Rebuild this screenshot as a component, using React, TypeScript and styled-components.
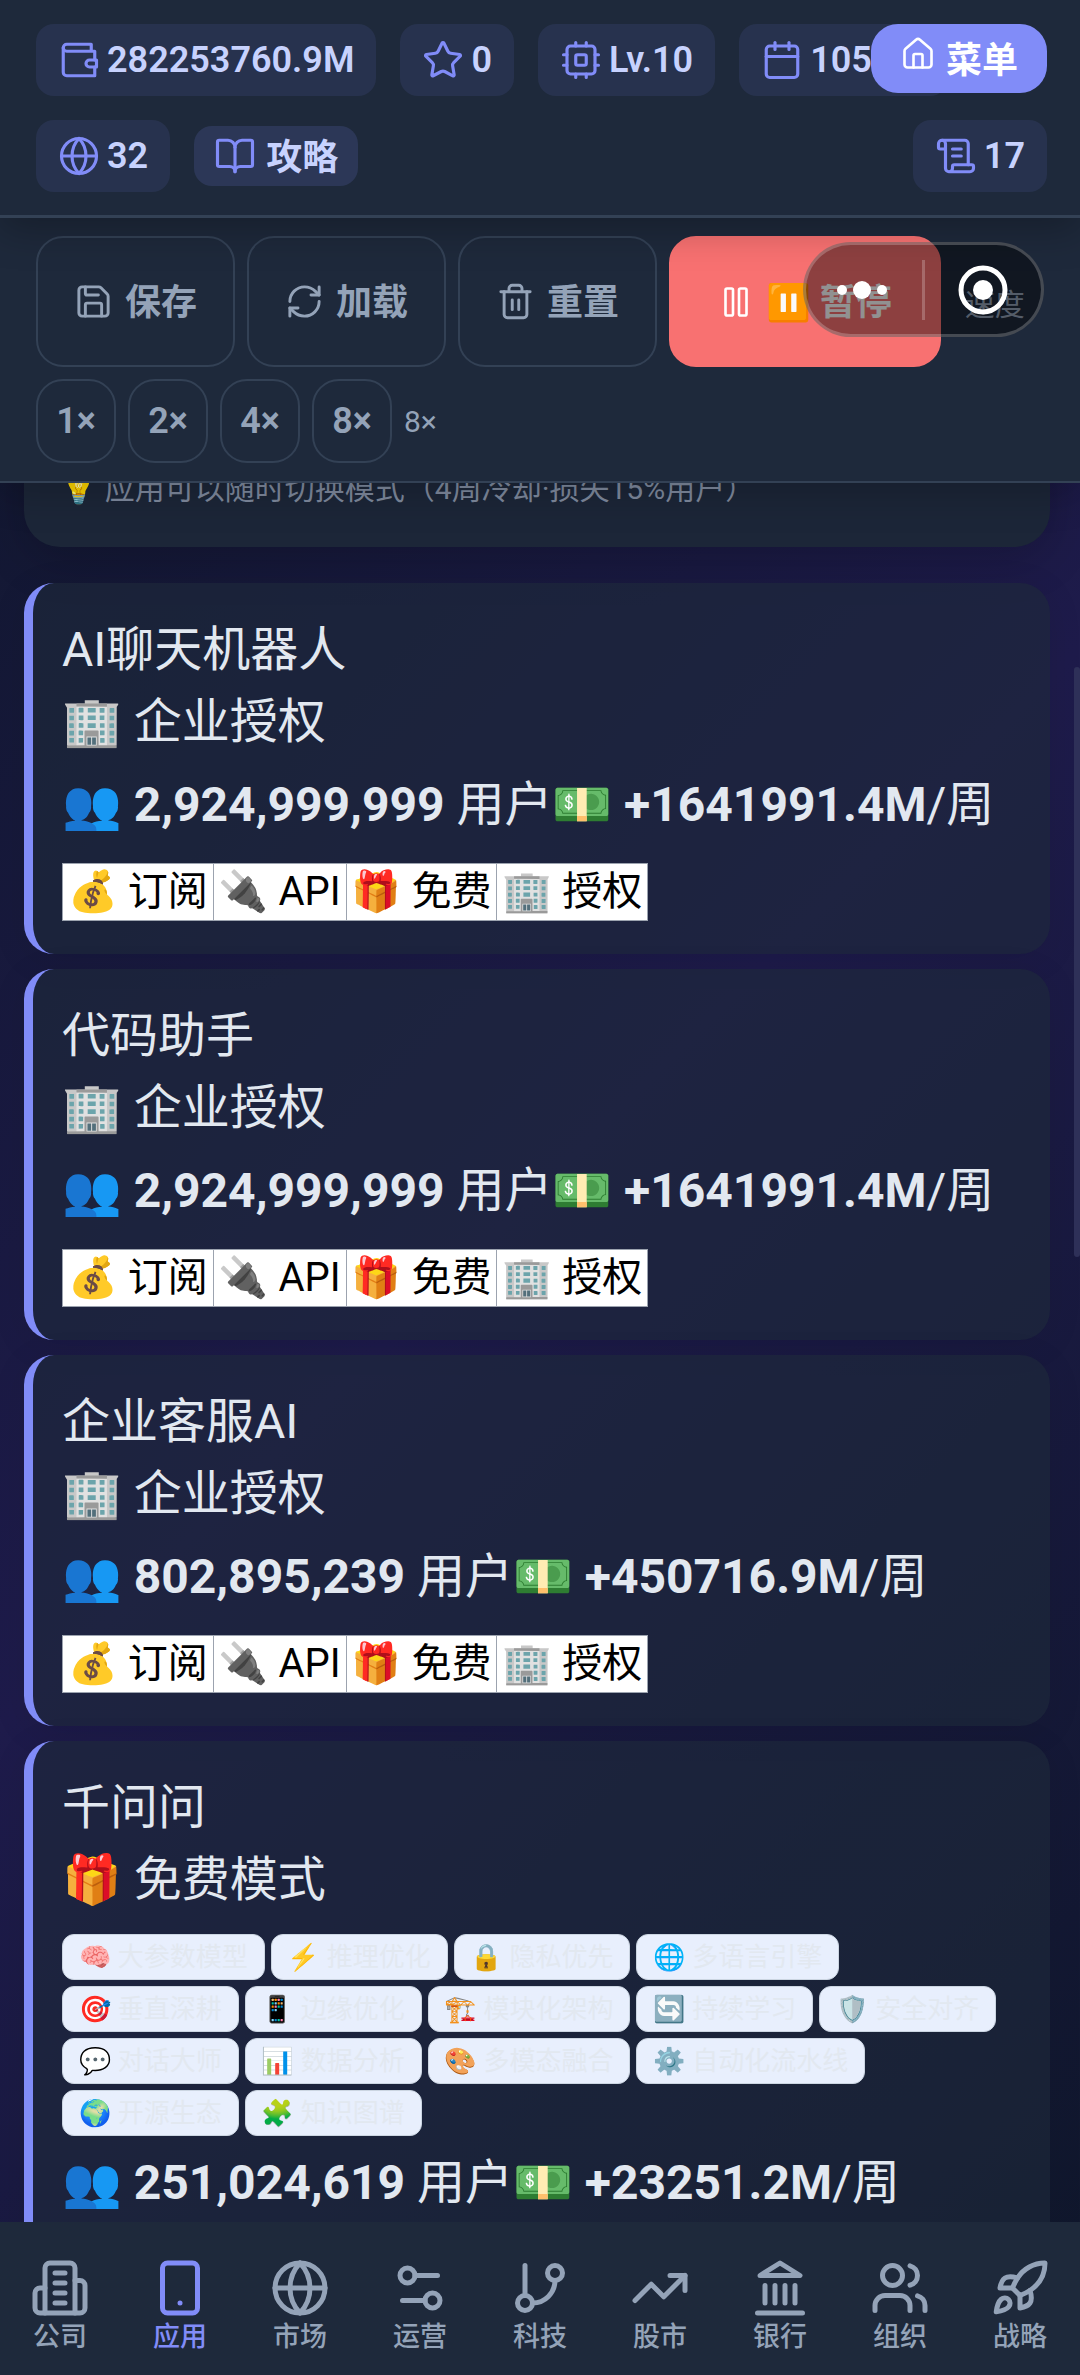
import React from 'react';
import styled, { createGlobalStyle } from 'styled-components';
import {
	BookOpen,
	Calendar,
	Globe,
	House,
	Pause,
	RefreshCw,
	Rocket,
	Save,
	ScrollText,
	Settings2,
	Smartphone,
	Star,
	Trash2,
	TrendingUp,
	Users
} from 'lucide-react';

const GlobalStyle = createGlobalStyle`
	* {
		box-sizing: border-box;
	}
	body {
		margin: 0;
		background: #0f172a;
		color: #e2e8f0;
		font-family: Roboto, 'Noto Sans CJK SC', 'Noto Color Emoji', sans-serif;
	}
	button {
		font-family: inherit;
		cursor: pointer;
	}
	svg {
		flex: none;
	}
`;

/* icons lucide does not ship in this shape */

const SvgIcon = ({ size = 24, strokeWidth = 2, children = null as React.ReactNode }): JSX.Element => (
	<svg
		width={size}
		height={size}
		viewBox="0 0 24 24"
		fill="none"
		stroke="currentColor"
		strokeWidth={strokeWidth}
		strokeLinecap="round"
		strokeLinejoin="round"
		aria-hidden="true"
	>
		{children}
	</svg>
);

const WalletIcon = (props): JSX.Element => (
	<SvgIcon {...props}>
		<path d="M21 12V7H5a2 2 0 0 1 0-4h14v4" />
		<path d="M3 5v14a2 2 0 0 0 2 2h16v-5" />
		<path d="M18 12a2 2 0 0 0 0 4h4v-4Z" />
	</SvgIcon>
);

const ChipIcon = (props): JSX.Element => (
	<SvgIcon {...props}>
		<rect x="4" y="4" width="16" height="16" rx="2" />
		<rect x="9" y="9" width="6" height="6" rx="1" />
		<path d="M15 2v2M15 20v2M9 2v2M9 20v2M2 15h2M2 9h2M20 15h2M20 9h2" />
	</SvgIcon>
);

const CompanyIcon = (props): JSX.Element => (
	<SvgIcon {...props}>
		<path d="M6 22V4a2 2 0 0 1 2-2h8a2 2 0 0 1 2 2v18Z" />
		<path d="M6 12H4a2 2 0 0 0-2 2v6a2 2 0 0 0 2 2h2" />
		<path d="M18 9h2a2 2 0 0 1 2 2v9a2 2 0 0 1-2 2h-2" />
		<path d="M10 6h4M10 10h4M10 14h4M10 18h4" />
	</SvgIcon>
);

const BranchIcon = (props): JSX.Element => (
	<SvgIcon {...props}>
		<path d="M6 3v12" />
		<circle cx="18" cy="6" r="3" />
		<circle cx="6" cy="18" r="3" />
		<path d="M18 9a9 9 0 0 1-9 9" />
	</SvgIcon>
);

const BankIcon = (props): JSX.Element => (
	<SvgIcon {...props}>
		<path d="M3 22h18M6 18v-7M10 18v-7M14 18v-7M18 18v-7" />
		<path d="M12 2l8 5H4z" />
	</SvgIcon>
);

/* layout */

const Shell = styled.div`
	position: relative;
	display: flex;
	flex-direction: column;
	height: 100vh;
	overflow: hidden;
	background: linear-gradient(135deg, #0f172a 0%, #1e1b4b 50%, #0f172a 100%);
`;

const Header = styled.header`
	position: relative;
	z-index: 3;
	display: flex;
	flex-wrap: wrap;
	align-items: center;
	gap: 24px;
	padding: 24px 33px 23px 36px;
	background: #1e293b;
	border-bottom: 3px solid #334155;
	box-shadow: 0 12px 36px rgba(0, 0, 0, 0.25);
`;

const Stat = styled.div<{ $push?: boolean; $wide?: boolean }>`
	display: flex;
	align-items: center;
	gap: 7px;
	height: 72px;
	padding: 0 ${({ $wide }) => ($wide ? '40px' : '22px')} 0 22px;
	border-radius: 18px;
	background: rgba(129, 140, 248, 0.1);
	color: #c7d2fe;
	font-size: 36px;
	font-weight: 600;
	line-height: 44px;
	${({ $push }) => $push && 'margin-left: auto;'}
	svg {
		color: #818cf8;
	}
`;

const GuideButton = styled.button`
	display: flex;
	align-items: center;
	gap: 10px;
	height: 60px;
	padding: 0 20px 4px;
	border: none;
	border-radius: 18px;
	background: rgba(129, 140, 248, 0.15);
	color: #c7d2fe;
	font-size: 36px;
	font-weight: 600;
	svg {
		margin-top: 4px;
		color: #818cf8;
	}
`;

const MenuButton = styled.button`
	position: absolute;
	top: 24px;
	right: 33px;
	display: flex;
	align-items: center;
	gap: 10px;
	height: 69px;
	padding: 0 29px 4px;
	border: none;
	border-radius: 27px;
	background: #818cf8;
	color: #fff;
	font-size: 36px;
	font-weight: 600;
	svg {
		margin-bottom: 6px;
	}
`;

const Toolbar = styled.div`
	position: relative;
	z-index: 2;
	display: flex;
	flex-wrap: wrap;
	align-items: center;
	gap: 12px;
	padding: 18px 36px;
	background: #1e293b;
	border-bottom: 2px solid #334155;
	box-shadow: 0 12px 36px rgba(0, 0, 0, 0.2);
`;

const ToolButton = styled.button<{ $danger?: boolean }>`
	display: flex;
	align-items: center;
	gap: 12px;
	height: 131px;
	padding: 0 36px 5px;
	border: 2px solid #334155;
	border-radius: 27px;
	background: transparent;
	color: #94a3b8;
	font-size: 36px;
	font-weight: 600;
	svg {
		margin-top: 5px;
	}
	${({ $danger }) => $danger && `
		padding: 0 47px 5px;
		border-color: #f87171;
		background: #f87171;
		color: #fff;
	`}
`;

const ToolLabel = styled.span<{ $indent?: boolean }>`
	color: #94a3b8;
	font-size: 30px;
	${({ $indent }) => $indent && 'margin-left: 12px;'}
`;

const SpeedButton = styled.button`
	height: 84px;
	min-width: 80px;
	padding: 0;
	border: 2px solid #334155;
	border-radius: 27px;
	background: transparent;
	color: #94a3b8;
	font-size: 36px;
	font-weight: 600;
`;

/* host app controls floating over the page */
const Capsule = styled.div`
	position: absolute;
	z-index: 4;
	top: 242px;
	right: 36px;
	display: grid;
	grid-template-columns: 116px 1fr;
	align-items: center;
	width: 241px;
	height: 95px;
	border: 3px solid rgba(255, 255, 255, 0.22);
	border-radius: 48px;
	background: rgba(0, 0, 0, 0.43);
`;

const CapsuleButton = styled.button`
	display: flex;
	align-items: center;
	justify-content: center;
	height: 60px;
	padding: 0 5px 0 0;
	border: none;
	background: none;
	color: #fff;
	& + & {
		padding: 0;
		border-left: 3px solid rgba(255, 255, 255, 0.22);
	}
`;

const Main = styled.main`
	position: relative;
	flex: 1;
	min-height: 0;
	padding: 0 30px 0 24px;
	overflow: hidden;
`;

/* the list is scrolled, so the tip starts above the visible area */
const Tip = styled.p`
	margin: -60px 0 36px;
	padding: 43px 36px 36px;
	border-radius: 36px;
	background: #1c2638;
	box-shadow: 0 12px 48px rgba(0, 0, 0, 0.2);
	color: #7f8a9e;
	font-size: 30px;
	line-height: 45px;
`;

const AppCard = styled.article`
	margin-bottom: 15px;
	padding: 31px 30px 33px 29px;
	border-left: 9px solid #818cf8;
	border-radius: 30px;
	background: rgba(30, 41, 59, 0.6);
	box-shadow: 0 6px 36px rgba(0, 0, 0, 0.08);
	font-size: 48px;
	line-height: 72px;
`;

const AppName = styled.h2`
	margin: 0;
	font-size: 48px;
	font-weight: 400;
	line-height: 72px;
`;

const AppMode = styled.div`
	white-space: nowrap;
`;

const AppStats = styled.div`
	margin-top: 11px;
	white-space: nowrap;
`;

const Traits = styled.ul`
	display: flex;
	flex-wrap: wrap;
	gap: 6px;
	margin: 18px 0 0;
	padding: 0;
	list-style: none;
`;

const Trait = styled.li`
	height: 46px;
	padding: 0 16px;
	border: 1px solid #cbd5e1;
	border-radius: 12px;
	background: #e8effd;
	color: #e2e8f0;
	font-size: 26px;
	line-height: 44px;
`;

const ModeRow = styled.div`
	display: flex;
	margin-top: 22px;
`;

const ModeButton = styled.button`
	height: 58px;
	padding: 0 5px;
	border: 1px solid #9ca3af;
	border-radius: 0;
	background: #fff;
	color: #000;
	font-size: 40px;
	line-height: 54px;
	white-space: nowrap;
	& + & {
		border-left: none;
	}
`;

const ScrollThumb = styled.div`
	position: absolute;
	top: 184px;
	right: 0;
	width: 6px;
	height: 590px;
	border-radius: 3px;
	background: #2e3058;
`;

const Nav = styled.nav`
	position: relative;
	z-index: 2;
	display: grid;
	grid-template-columns: repeat(9, 1fr);
	padding: 36px 0 21px;
	background: #1e293b;
`;

const NavItem = styled.a<{ $active?: boolean }>`
	display: flex;
	flex-direction: column;
	align-items: center;
	gap: 3px;
	color: ${({ $active }) => ($active ? '#818cf8' : '#94a3b8')};
	font-size: 27px;
	font-weight: 500;
	line-height: 33px;
	text-decoration: none;
`;

const modes = ['💰 订阅', '🔌 API', '🎁 免费', '🏢 授权'];

const apps = [
	{ name: 'AI聊天机器人', mode: '🏢 企业授权', users: '2,924,999,999', income: '+1641991.4M', traits: [] },
	{ name: '代码助手', mode: '🏢 企业授权', users: '2,924,999,999', income: '+1641991.4M', traits: [] },
	{ name: '企业客服AI', mode: '🏢 企业授权', users: '802,895,239', income: '+450716.9M', traits: [] },
	{
		name: '千问问',
		mode: '🎁 免费模式',
		users: '251,024,619',
		income: '+23251.2M',
		traits: [
			'🧠 大参数模型', '⚡ 推理优化', '🔒 隐私优先', '🌐 多语言引擎',
			'🎯 垂直深耕', '📱 边缘优化', '🏗️ 模块化架构', '🔄 持续学习', '🛡️ 安全对齐',
			'💬 对话大师', '📊 数据分析', '🎨 多模态融合', '⚙️ 自动化流水线',
			'🌍 开源生态', '🧩 知识图谱'
		]
	}
];

const navItems = [
	{ label: '公司', Icon: CompanyIcon },
	{ label: '应用', Icon: Smartphone, active: true },
	{ label: '市场', Icon: Globe },
	{ label: '运营', Icon: Settings2 },
	{ label: '科技', Icon: BranchIcon },
	{ label: '股市', Icon: TrendingUp },
	{ label: '银行', Icon: BankIcon },
	{ label: '组织', Icon: Users },
	{ label: '战略', Icon: Rocket }
];

const statIcon = { size: 42, strokeWidth: 1.8 };
const toolIcon = { size: 39, strokeWidth: 1.8 };

const AppItem = ({ app }): JSX.Element => (
	<AppCard>
		<AppName>{app.name}</AppName>
		<AppMode>{app.mode}</AppMode>
		{app.traits.length > 0 && (
			<Traits>
				{app.traits.map(trait => <Trait key={trait}>{trait}</Trait>)}
			</Traits>
		)}
		<AppStats>
			👥 <b>{app.users}</b> 用户💵 <b>{app.income}</b>/周
		</AppStats>
		<ModeRow>
			{modes.map(mode => <ModeButton key={mode} type="button">{mode}</ModeButton>)}
		</ModeRow>
	</AppCard>
);

const App = (): JSX.Element => (
	<>
		<GlobalStyle />
		<Shell>
			<Header>
				<Stat><WalletIcon {...statIcon} />282253760.9M</Stat>
				<Stat><Star {...statIcon} />0</Stat>
				<Stat><ChipIcon {...statIcon} />Lv.10</Stat>
				<Stat $wide><Calendar {...statIcon} />105周</Stat>
				<Stat><Globe {...statIcon} />32</Stat>
				<GuideButton type="button"><BookOpen {...statIcon} />攻略</GuideButton>
				<Stat $push><ScrollText {...statIcon} />17</Stat>
				<MenuButton type="button"><House size={36} strokeWidth={1.75} />菜单</MenuButton>
			</Header>
			<Toolbar>
				<ToolButton type="button"><Save {...toolIcon} />保存</ToolButton>
				<ToolButton type="button"><RefreshCw {...toolIcon} />加载</ToolButton>
				<ToolButton type="button"><Trash2 {...toolIcon} />重置</ToolButton>
				<ToolButton type="button" $danger><Pause size={36} strokeWidth={1.75} />⏸️ 暂停</ToolButton>
				<ToolLabel $indent>速度</ToolLabel>
				{[1, 2, 4, 8].map(speed => <SpeedButton key={speed} type="button">{speed}×</SpeedButton>)}
				<ToolLabel>8×</ToolLabel>
			</Toolbar>
			<Main>
				<Tip>💡 应用可以随时切换模式（4周冷却·损失15%用户）</Tip>
				{apps.map(app => <AppItem key={app.name} app={app} />)}
				<ScrollThumb />
			</Main>
			<Nav>
				{navItems.map(({ label, Icon, active }) => (
					<NavItem key={label} href="#" $active={active}>
						<Icon size={60} strokeWidth={2} />
						{label}
					</NavItem>
				))}
			</Nav>
			<Capsule>
				<CapsuleButton type="button" aria-label="更多">
					<svg width="52" height="20" viewBox="0 0 52 20" fill="currentColor">
						<circle cx="6" cy="10" r="5" />
						<circle cx="26" cy="10" r="9" />
						<circle cx="46" cy="10" r="5" />
					</svg>
				</CapsuleButton>
				<CapsuleButton type="button" aria-label="关闭">
					<svg width="50" height="50" viewBox="0 0 50 50" fill="none">
						<circle cx="25" cy="25" r="22" stroke="currentColor" strokeWidth="5" />
						<circle cx="25" cy="25" r="10" fill="currentColor" />
					</svg>
				</CapsuleButton>
			</Capsule>
		</Shell>
	</>
);

export default App;
